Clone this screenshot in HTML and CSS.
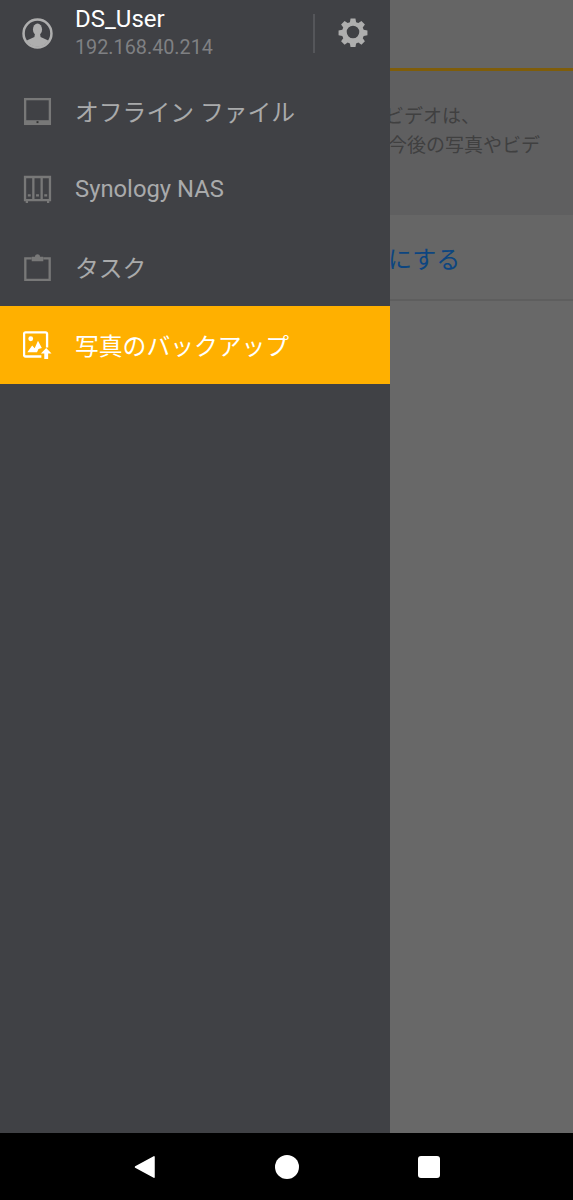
FILE: index.html
```html
<!DOCTYPE html>
<html lang="ja">
<head>
<meta charset="utf-8">
<title>DS file</title>
<link rel="stylesheet" href="styles.css">
</head>
<body>
<div class="screen">
  <aside class="drawer">
    <header class="account">
      <svg class="ico-avatar" viewBox="0 0 32 32"><defs><clipPath id="ring"><circle cx="16" cy="16" r="13.6"/></clipPath></defs><circle cx="16" cy="16" r="14.400" fill="none" stroke="#aeaeae" stroke-width="2.600"/><g clip-path="url(#ring)" fill="#aeaeae"><ellipse cx="16" cy="11.800" rx="4.700" ry="6"/><path d="M13.400 16h5.200l.6 3.600 6.800 3c1.400.6 2 2 2 4V31H4v-4.400c0-2 .6-3.400 2-4l6.800-3z"/></g></svg>
      <div class="who">
        <div class="user">DS_User</div>
        <div class="ip">192.168.40.214</div>
      </div>
      <div class="divider"></div>
      <svg class="ico-gear" viewBox="0 0 32 32"><path fill="#aeaeae" fill-rule="evenodd" d="M13.400 1.500h5.200l.7 4 2.400 1 3.300-2.300 3.700 3.700-2.300 3.300 1 2.400 4 .7v5.200l-4 .7-1 2.400 2.300 3.300-3.700 3.700-3.300-2.300-2.400 1-.7 4h-5.200l-.7-4-2.400-1-3.300 2.300-3.700-3.700 2.300-3.300-1-2.400-4-.7v-5.200l4-.7 1-2.400-2.300-3.300 3.700-3.700 3.300 2.300 2.400-1zM16 9.300a6.700 6.700 0 1 0 0 13.400a6.700 6.700 0 0 0 0-13.400z"/></svg>
    </header>
    <nav class="menu">
      <a class="item">
        <svg class="ico" viewBox="0 0 30 30"><rect x="2.200" y="2.200" width="25.600" height="25.600" fill="none" stroke="#787878" stroke-width="2.400"/><rect x="2" y="24" width="26" height="4" fill="#787878"/><rect x="14" y="25" width="2" height="2" fill="#333"/></svg>
        <span>オフライン ファイル</span>
      </a>
      <a class="item">
        <svg class="ico" viewBox="0 0 30 30"><path fill="none" stroke="#787878" stroke-width="2.400" d="M2.100 2.100h25.800v23.800H2.100zM10.700 2v24M19.300 2v24"/><path stroke="#787878" stroke-width="2.400" d="M4 26v3M26 26v3M5 21h3M13.500 21h3M22 21h3"/></svg>
        <span>Synology NAS</span>
      </a>
      <a class="item">
        <svg class="ico" viewBox="0 0 30 30"><path fill="none" stroke="#787878" stroke-width="2.400" d="M9 5.600H2.400v22.200h25.200V5.600H21"/><path fill="#787878" d="M9 8.500V3.800h3.400a2.600 2.600 0 0 1 5.200 0H21v4.700z"/></svg>
        <span>タスク</span>
      </a>
      <a class="item active">
        <svg class="ico" viewBox="0 0 30 30"><path fill="none" stroke="#fff" stroke-width="2.400" stroke-linejoin="round" d="M19 26.400H2.600a1.500 1.500 0 0 1-1.500-1.500V3a1.500 1.500 0 0 1 1.500-1.500h20.800a1.500 1.500 0 0 1 1.500 1.500v14"/><circle cx="8" cy="8" r="2.500" fill="#fff"/><path fill="#fff" d="M4.500 22l5-7 2.600 2.800L15.500 10l4 7.500-3.500 1-1.500 3.500z"/><path fill="#fff" d="M24 17.500l5.500 5.800h-3.500V29h-4v-5.700h-3.500z"/></svg>
        <span>写真のバックアップ</span>
      </a>
    </nav>
  </aside>
  <main class="pane">
    <div class="bar"></div>
    <section class="notice">
      <p class="line first">ビデオは、</p>
      <p class="line second">今後の写真やビデ</p>
    </section>
    <div class="action"><span>にする</span></div>
  </main>
</div>
<footer class="sysnav">
  <svg viewBox="0 0 24 24"><path fill="#fff" stroke="#fff" stroke-width="1.500" stroke-linejoin="round" d="M2.500 12L21 1.800v20.400z"/></svg>
  <svg viewBox="0 0 24 24"><circle cx="12" cy="12" r="12" fill="#fff"/></svg>
  <svg viewBox="0 0 24 24"><rect x="1" y="1" width="22" height="22" rx="3" fill="#fff"/></svg>
</footer>
</body>
</html>
```

FILE: styles.css
```css
* { box-sizing: border-box; }
html, body { margin: 0; padding: 0; }
body {
  width: 573px;
  height: 1200px;
  overflow: hidden;
  display: flex;
  flex-direction: column;
  background: #000;
  font-family: Roboto, "Noto Sans CJK JP", sans-serif;
}
.screen { flex: 0 0 1133px; display: flex; }
.drawer { flex: 0 0 390px; background: #404145; }
.account {
  height: 72px;
  padding: 0 0 6px 22px;
  display: flex;
  align-items: center;
}
.ico-avatar { width: 31px; height: 31px; flex: none; }
.who { margin-left: 22px; width: 237px; }
.user { color: #fff; font-size: 24px; line-height: 26px; }
.ip { color: #7f8083; font-size: 19.800px; line-height: 24px; margin-top: 4px; }
.divider { width: 2px; height: 39px; background: #55565a; margin-left: 1px; }
.ico-gear { width: 30px; height: 30px; margin-left: 23px; margin-top: -2px; flex: none; }
.item {
  height: 78px;
  display: flex;
  align-items: center;
  padding-left: 23px;
  color: #a9aaab;
  font-size: 23.800px;
}
.item span { margin-top: -1px; }
.item .ico { width: 29px; height: 29px; flex: none; margin-right: 23px; }
.item.active { background: #ffb000; color: #fff; }
.pane {
  flex: 1;
  overflow: hidden;
  background: #686868;
  display: flex;
  flex-direction: column;
}
.bar { height: 71px; background: #656565; border-bottom: 3px solid #7f5d0a; }
.notice { height: 144px; background: #5f5f60; padding-top: 31px; }
.line { margin: 0; color: #404040; font-size: 19px; line-height: 29px; white-space: nowrap; }
.first { margin-left: -5px; }
.second { margin-left: -2px; }
.action {
  height: 86px;
  background: #666;
  border-bottom: 2px solid #5e5e5e;
  display: flex;
  align-items: center;
  color: #0c4580;
  font-size: 24px;
}
.action span { margin-left: -2px; }
.sysnav {
  flex: 1;
  display: flex;
  justify-content: center;
  align-items: center;
  gap: 118px;
}
.sysnav svg { width: 24px; height: 24px; }
```
